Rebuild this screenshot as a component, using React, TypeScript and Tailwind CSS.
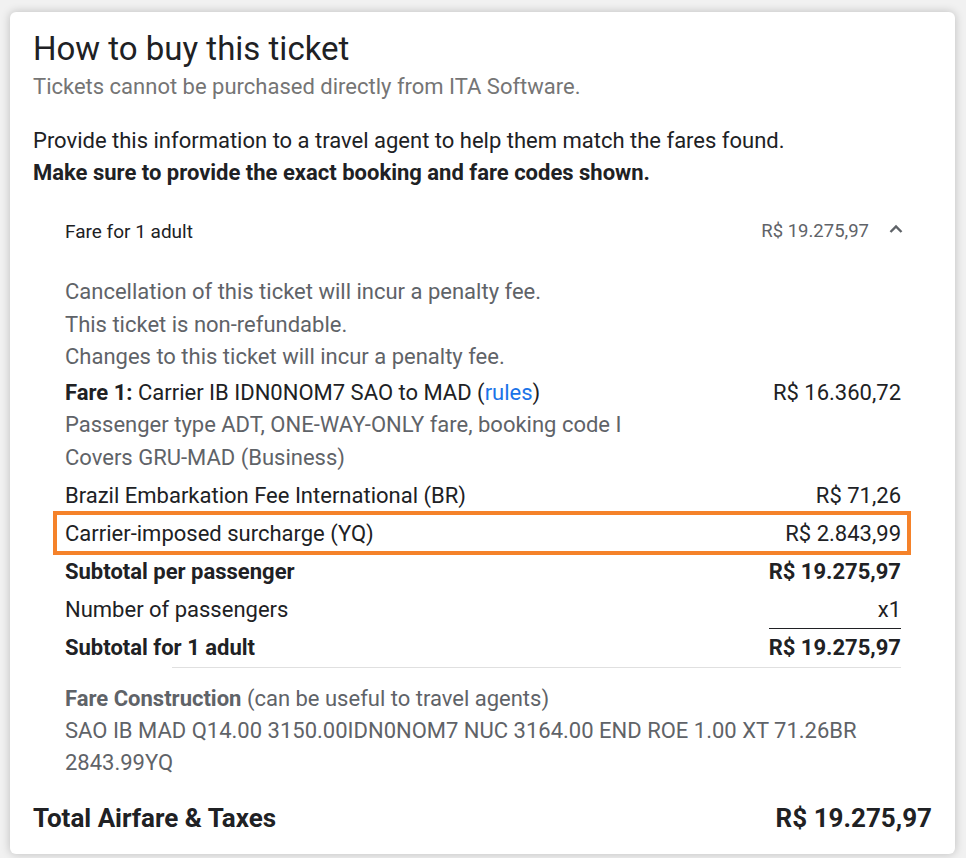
import React from "react";

const font = { fontFamily: "Roboto, 'Liberation Sans', Arial, sans-serif" };

function PriceRow({ label, amount, bold, underline }: { label: React.ReactNode; amount: React.ReactNode; bold?: boolean; underline?: "gray" | "black" }) {
  return (
    <div className={`flex justify-between items-stretch h-[38px] text-[22px] leading-[38px] text-[#202124] ${bold ? "font-bold" : ""}`}>
      <div>{label}</div>
      <div className={`min-w-[132px] text-right ${underline === "gray" ? "border-b border-[#5f6368]" : ""} ${underline === "black" ? "border-b border-[#202124]" : ""}`}>{amount}</div>
    </div>
  );
}

export default function App() {
  return (
    <div className="w-[966px] h-[858px] bg-[#f1f1f1] pt-[12px] pl-[10px]" style={font}>
      <div className="w-[945px] h-[842px] bg-white rounded-[6px] shadow-[0_0_10px_rgba(0,0,0,0.22)] pt-[19px] px-[23px]">
        <h1 className="text-[33px] leading-[36px] text-[#202124] font-normal">How to buy this ticket</h1>
        <p className="mt-[4px] text-[22px] leading-[32px] text-[#757575]">Tickets cannot be purchased directly from ITA Software.</p>
        <p className="mt-[22px] text-[22px] leading-[32px] text-[#202124]">Provide this information to a travel agent to help them match the fares found.</p>
        <p className="text-[22px] leading-[32px] text-[#202124] font-bold">Make sure to provide the exact booking and fare codes shown.</p>

        <div className="mt-[15px] px-[32px] pr-[31px]">
          <div className="flex justify-between items-center h-[56px]">
            <div className="text-[19px] text-[#202124]">Fare for 1 adult</div>
            <div className="flex items-center gap-[20px] mr-[-2px]">
              <span className="text-[18.5px] text-[#5f6368]">R$ 19.275,97</span>
              <svg width="14" height="10" viewBox="0 0 14 10" className="mt-[-6px]">
                <polyline points="1.5,8 7,2.5 12.5,8" fill="none" stroke="#5f6368" strokeWidth="2.4" />
              </svg>
            </div>
          </div>

          <div className="pt-[16px] text-[22px] leading-[32.5px] text-[#5f6368]">
            <div>Cancellation of this ticket will incur a penalty fee.</div>
            <div>This ticket is non-refundable.</div>
            <div>Changes to this ticket will incur a penalty fee.</div>
          </div>

          <div className="mt-[3px] text-[22px] leading-[32px]">
            <div className="flex justify-between text-[#202124]">
              <div><span className="font-bold">Fare 1:</span> Carrier IB IDN0NOM7 SAO to MAD (<span className="text-[#1a73e8]">rules</span>)</div>
              <div>R$ 16.360,72</div>
            </div>
            <div className="text-[#5f6368]">Passenger type ADT, ONE-WAY-ONLY fare, booking code I</div>
            <div className="text-[#5f6368] leading-[33px]">Covers GRU-MAD (Business)</div>
          </div>

          <div className="mt-[3px]">
            <PriceRow label="Brazil Embarkation Fee International (BR)" amount="R$ 71,26" />
            <div className="relative">
              <PriceRow label="Carrier-imposed surcharge (YQ)" amount="R$ 2.843,99" underline="gray" />
              <div className="absolute left-[-12px] right-[-10px] top-[-4px] bottom-[-2px] border-[4px] border-[#f5822a] pointer-events-none" />
            </div>
            <PriceRow label="Subtotal per passenger" amount="R$ 19.275,97" bold />
            <PriceRow label="Number of passengers" amount="x1" underline="black" />
            <PriceRow label="Subtotal for 1 adult" amount="R$ 19.275,97" bold />
            <div className="ml-[107px] border-t border-[#e0e0e0]" />
          </div>

          <div className="mt-[15px] text-[22px] leading-[32px] text-[#5f6368]">
            <div><span className="font-bold">Fare Construction</span> (can be useful to travel agents)</div>
            <div>SAO IB MAD Q14.00 3150.00IDN0NOM7 NUC 3164.00 END ROE 1.00 XT 71.26BR</div>
            <div>2843.99YQ</div>
          </div>
        </div>

        <div className="mt-[21px] flex justify-between text-[26px] leading-[36px] font-bold text-[#202124]">
          <div>Total Airfare &amp; Taxes</div>
          <div>R$ 19.275,97</div>
        </div>
      </div>
    </div>
  );
}
